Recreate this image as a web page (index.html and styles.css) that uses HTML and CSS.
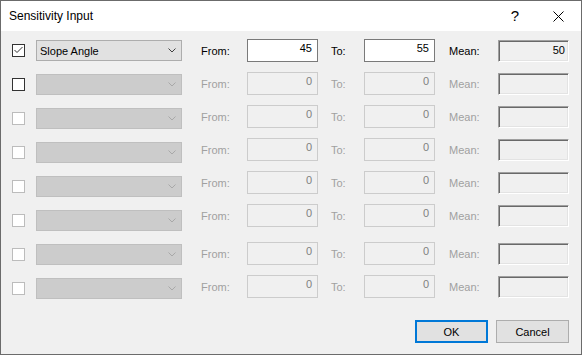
FILE: index.html
```html
<!DOCTYPE html>
<html lang="en">
<head>
    <meta charset="UTF-8">
    <title>Sensitivity Input</title>
    <link rel="stylesheet" href="styles.css">
</head>
<body>
    <div class="window">
        <div class="titlebar">
            <span class="title">Sensitivity Input</span>
            <span class="help">?</span>
            <span class="close">
                <svg width="11" height="11" viewBox="0 0 11 11"><path d="M0.5 0.5 L10.5 10.5 M10.5 0.5 L0.5 10.5" stroke="#000" stroke-width="1" fill="none"/></svg>
            </span>
        </div>

        <div class="content">
            <div class="params">
                <!-- variable pickers -->
                <div class="picks">
                    <div class="pick">
                        <span class="check">
                            <svg width="11" height="11" viewBox="0 0 11 11"><path d="M1.5 5 L4 7.5 L9.5 2" stroke="#333" stroke-width="1" fill="none"/></svg>
                        </span>
                        <div class="combo">
                            <span>Slope Angle</span>
                            <svg width="8" height="5" viewBox="0 0 8 5"><path d="M0.5 0.5 L4 4 L7.5 0.5" stroke="#404040" fill="none"/></svg>
                        </div>
                    </div>
                    <div class="pick">
                        <span class="check"></span>
                        <div class="combo off"><span></span><svg width="8" height="5" viewBox="0 0 8 5"><path d="M0.5 0.5 L4 4 L7.5 0.5" stroke="#a8a8a8" fill="none"/></svg></div>
                    </div>
                    <div class="pick">
                        <span class="check off"></span>
                        <div class="combo off"><span></span><svg width="8" height="5" viewBox="0 0 8 5"><path d="M0.5 0.5 L4 4 L7.5 0.5" stroke="#a8a8a8" fill="none"/></svg></div>
                    </div>
                    <div class="pick">
                        <span class="check off"></span>
                        <div class="combo off"><span></span><svg width="8" height="5" viewBox="0 0 8 5"><path d="M0.5 0.5 L4 4 L7.5 0.5" stroke="#a8a8a8" fill="none"/></svg></div>
                    </div>
                    <div class="pick">
                        <span class="check off"></span>
                        <div class="combo off"><span></span><svg width="8" height="5" viewBox="0 0 8 5"><path d="M0.5 0.5 L4 4 L7.5 0.5" stroke="#a8a8a8" fill="none"/></svg></div>
                    </div>
                    <div class="pick">
                        <span class="check off"></span>
                        <div class="combo off"><span></span><svg width="8" height="5" viewBox="0 0 8 5"><path d="M0.5 0.5 L4 4 L7.5 0.5" stroke="#a8a8a8" fill="none"/></svg></div>
                    </div>
                    <div class="pick">
                        <span class="check off"></span>
                        <div class="combo off"><span></span><svg width="8" height="5" viewBox="0 0 8 5"><path d="M0.5 0.5 L4 4 L7.5 0.5" stroke="#a8a8a8" fill="none"/></svg></div>
                    </div>
                    <div class="pick">
                        <span class="check off"></span>
                        <div class="combo off"><span></span><svg width="8" height="5" viewBox="0 0 8 5"><path d="M0.5 0.5 L4 4 L7.5 0.5" stroke="#a8a8a8" fill="none"/></svg></div>
                    </div>
                </div>

                <!-- from / to / mean ranges -->
                <div class="ranges">
                    <div class="range">
                        <span class="label">From:</span>
                        <span class="field">45</span>
                        <span class="label to">To:</span>
                        <span class="field">55</span>
                        <span class="label mean">Mean:</span>
                        <span class="mean-box">50</span>
                    </div>
                    <div class="range off">
                        <span class="label">From:</span>
                        <span class="field">0</span>
                        <span class="label to">To:</span>
                        <span class="field">0</span>
                        <span class="label mean">Mean:</span>
                        <span class="mean-box"></span>
                    </div>
                    <div class="range off">
                        <span class="label">From:</span>
                        <span class="field">0</span>
                        <span class="label to">To:</span>
                        <span class="field">0</span>
                        <span class="label mean">Mean:</span>
                        <span class="mean-box"></span>
                    </div>
                    <div class="range off">
                        <span class="label">From:</span>
                        <span class="field">0</span>
                        <span class="label to">To:</span>
                        <span class="field">0</span>
                        <span class="label mean">Mean:</span>
                        <span class="mean-box"></span>
                    </div>
                    <div class="range off">
                        <span class="label">From:</span>
                        <span class="field">0</span>
                        <span class="label to">To:</span>
                        <span class="field">0</span>
                        <span class="label mean">Mean:</span>
                        <span class="mean-box"></span>
                    </div>
                    <div class="range off">
                        <span class="label">From:</span>
                        <span class="field">0</span>
                        <span class="label to">To:</span>
                        <span class="field">0</span>
                        <span class="label mean">Mean:</span>
                        <span class="mean-box"></span>
                    </div>
                    <div class="range off spaced">
                        <span class="label">From:</span>
                        <span class="field">0</span>
                        <span class="label to">To:</span>
                        <span class="field">0</span>
                        <span class="label mean">Mean:</span>
                        <span class="mean-box"></span>
                    </div>
                    <div class="range off">
                        <span class="label">From:</span>
                        <span class="field">0</span>
                        <span class="label to">To:</span>
                        <span class="field">0</span>
                        <span class="label mean">Mean:</span>
                        <span class="mean-box"></span>
                    </div>
                </div>
            </div>

            <div class="actions">
                <button class="btn default">OK</button>
                <button class="btn">Cancel</button>
            </div>
        </div>
    </div>
</body>
</html>
```

FILE: styles.css
```css
* {
    box-sizing: border-box;
}

body {
    margin: 0;
    font-family: 'Liberation Sans', Arial, sans-serif;
    font-size: 11px;
    color: #000;
}

.window {
    width: 582px;
    height: 355px;
    border: 1px solid #6b6b6b;
    background-color: #f0f0f0;
    display: flex;
    flex-direction: column;
}

.titlebar {
    height: 30px;
    background-color: #ffffff;
    display: flex;
    line-height: 30px;
}

.title {
    flex: 1;
    padding-left: 8px;
    font-size: 12px;
}

.help {
    width: 40px;
    text-align: center;
    font-size: 15px;
}

.close {
    width: 46px;
    display: flex;
    align-items: center;
    justify-content: center;
}

.content {
    flex: 1;
    display: flex;
    flex-direction: column;
    padding: 8px 12px 11px 11px;
}

.params {
    display: flex;
    gap: 19px;
}

.picks {
    display: flex;
    flex-direction: column;
    gap: 13px;
    padding-top: 1px;
}

.pick {
    display: flex;
    align-items: center;
    gap: 11px;
    height: 21px;
}

.check {
    width: 13px;
    height: 13px;
    border: 1px solid #333333;
    background-color: #ffffff;
    display: flex;
}

.check.off {
    border-color: #bcbcbc;
}

.combo {
    width: 146px;
    height: 21px;
    border: 1px solid #adadad;
    background-color: #e1e1e1;
    display: flex;
    align-items: center;
    justify-content: space-between;
    padding: 0 5px 0 3px;
    line-height: 14px;
}

.combo.off {
    background-color: #cccccc;
    border-color: #bfbfbf;
}

.ranges {
    display: flex;
    flex-direction: column;
    gap: 10px;
}

.range {
    display: flex;
    align-items: center;
    height: 23px;
    line-height: 14px;
}

.range.spaced {
    margin-top: 5px;
}

.label {
    width: 46px;
}

.label.to {
    width: 33px;
    margin-left: 13px;
}

.label.mean {
    width: 49px;
    margin-left: 14px;
}

.field {
    width: 71px;
    height: 23px;
    border: 1px solid #7a7a7a;
    background-color: #ffffff;
    text-align: right;
    padding: 1px 5px 0 0;
}

.range.off .label {
    color: #a0a0a0;
}

.range.off .field {
    border-color: #cccccc;
    background-color: #f0f0f0;
    color: #808080;
}

.mean-box {
    width: 71px;
    height: 22px;
    align-self: flex-end;
    border: 1px solid;
    border-color: #a0a0a0 #ffffff #ffffff #a0a0a0;
    box-shadow: inset 1px 1px #696969, inset -1px -1px #e3e3e3;
    text-align: right;
    padding: 2px 3px 0 0;
}

.actions {
    margin-top: auto;
    display: flex;
    justify-content: flex-end;
    gap: 8px;
}

.btn {
    width: 73px;
    height: 23px;
    border: 1px solid #adadad;
    background-color: #e1e1e1;
    font-family: 'Liberation Sans', Arial, sans-serif;
    font-size: 11px;
    color: #000;
    padding: 0;
}

.btn.default {
    border: 2px solid #0078d7;
}
```
